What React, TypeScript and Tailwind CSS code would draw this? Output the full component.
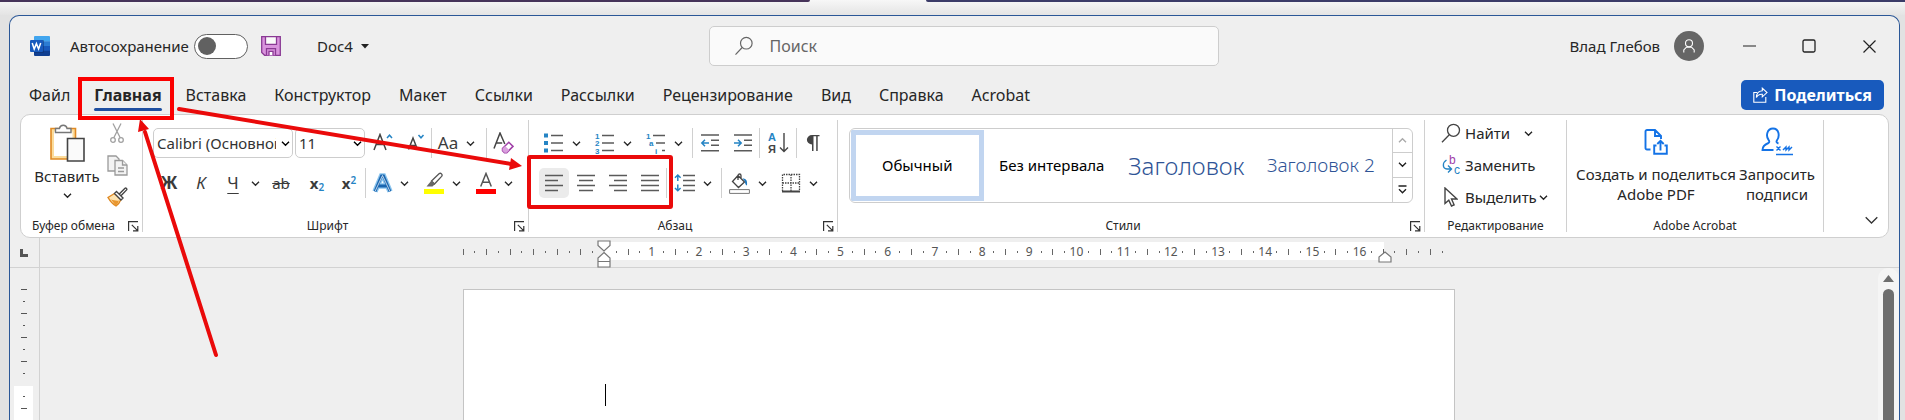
import type { ReactNode } from "react";

const Chevron = ({ className = "" }: { className?: string }) => (
  <svg width="9" height="9" viewBox="0 0 9 9" fill="none" stroke="currentColor" strokeWidth="1.4" className={className} aria-hidden="true">
    <path d="M1 2.8 4.5 6.2 8 2.8" />
  </svg>
);

const More = ({ label }: { label: string }) => (
  <button type="button" aria-label={label} className="flex h-full w-3 shrink-0 items-center justify-center text-[#2b2b2b]">
    <Chevron />
  </button>
);

const Tool = ({ label, children, className = "w-8" }: { label: string; children: ReactNode; className?: string }) => (
  <button type="button" aria-label={label} title={label} className={`flex h-full shrink-0 items-center justify-center text-[#3b3b3b] ${className}`}>
    {children}
  </button>
);

const Sep = ({ className = "" }: { className?: string }) => <div className={`h-full w-px shrink-0 bg-[#d0d0d0] ${className}`} />;

const GroupSep = () => <div className="my-[5px] w-px shrink-0 bg-[#d0d0d0]" />;

const Row = ({ children }: { children: ReactNode }) => <div className="flex h-[30px] items-center">{children}</div>;

const Launcher = ({ label }: { label: string }) => (
  <button type="button" aria-label={label} className="mr-0.5 flex w-3.5 justify-center">
    <svg width="11" height="11" viewBox="0 0 11 11" fill="none" stroke="#333" strokeWidth="1.2">
      <path d="M.6 10V.6H10M3.8 3.8 9.6 9.6M9.8 5V9.8H5" />
    </svg>
  </button>
);

const Group = ({ name, className, launcher = true, children }: { name: string; className: string; launcher?: boolean; children: ReactNode }) => (
  <section aria-label={name} className={`flex flex-col ${className}`}>
    {children}
    <div className="mt-auto flex h-[22px] items-center">
      <span className="flex-1 text-center text-[12px] text-[#262626]">{name}</span>
      {launcher && <Launcher label={`Параметры: ${name}`} />}
    </div>
  </section>
);

const Lines = ({ rows }: { rows: [number, number][] }) => (
  <svg width="20" height="20" viewBox="0 0 20 20" stroke="#5a5a5a" strokeWidth="1.5" aria-hidden="true">
    {rows.map(([a, b], i) => (
      <path key={i} d={`M${a} ${2.5 + i * 5}H${b}`} />
    ))}
  </svg>
);

const ListIcon = ({ marks }: { marks: string[] }) => (
  <svg width="20" height="24" viewBox="0 0 20 24" className="overflow-visible font-['Liberation_Sans',sans-serif]" aria-hidden="true">
    {marks.map((m, i) => {
      const y = 4.5 + i * 7.5;
      const shift = m === "a" ? 3 : m === "i" ? 9 : 0;
      return (
        <g key={i}>
          {m === "•" ? (
            <rect x="0" y={y - 2} width="4" height="4" fill="#2584c4" />
          ) : (
            <text x={shift} y={y + 3} fontSize="8" fontWeight="700" fill="#2584c4">{m}</text>
          )}
          <path d={`M${7 + shift} ${y}H19`} stroke="#5a5a5a" strokeWidth="1.5" />
        </g>
      );
    })}
  </svg>
);

const IndentIcon = ({ right = false }: { right?: boolean }) => (
  <svg width="20" height="20" viewBox="0 0 20 20" fill="none" strokeWidth="1.5" aria-hidden="true">
    <path d="M1 2h18M11 7.3h8M11 12.3h8M1 17.7h18" stroke="#5a5a5a" />
    <path d={right ? "M1 10h7M5 6.8 8.2 10 5 13.2" : "M9 10H2M5 6.8 1.8 10 5 13.2"} stroke="#2584c4" />
  </svg>
);

const TABS = ["Файл", "Главная", "Вставка", "Конструктор", "Макет", "Ссылки", "Рассылки", "Рецензирование", "Вид", "Справка", "Acrobat"];

const TitleBar = () => (
  <header className="grid h-[60px] grid-cols-[1fr_510px_1fr] items-center pl-[18px] text-[15px] text-[#262626]">
    <div className="flex items-center pl-0.5">
      <svg width="20" height="20" viewBox="0 0 20 20" aria-hidden="true">
        <path d="M5 0h14a1 1 0 0 1 1 1v4.5H4V1a1 1 0 0 1 1-1Z" fill="#41a5ee" />
        <path d="M4 5.3h16v5H4z" fill="#2b7cd3" />
        <path d="M4 10h16v5H4z" fill="#185abd" />
        <path d="M4 14.7h16V19a1 1 0 0 1-1 1H5a1 1 0 0 1-1-1z" fill="#103f91" />
        <path d="M4 4h9a1 1 0 0 1 1 1v11a1 1 0 0 1-1 1H4z" fill="#0d2f6b" opacity=".5" />
        <rect y="4" width="13" height="12" rx="1" fill="#185abd" />
        <path d="M2.2 7 4.2 13 6.4 7.6 8.6 13 10.7 7" fill="none" stroke="#fff" strokeWidth="1.5" />
      </svg>
      <label htmlFor="autosave" className="ml-5 w-[124px]">Автосохранение</label>
      <span className="relative flex h-[25px] w-[54px] items-center rounded-full border border-[#616161] bg-white">
        <input id="autosave" type="checkbox" role="switch" className="absolute inset-0 size-full appearance-none rounded-full" />
        <span className="ml-[3px] size-[18px] rounded-full bg-[#616161]" />
      </span>
      <button type="button" aria-label="Сохранить" className="ml-[13px]">
        <svg width="20" height="20" viewBox="0 0 20 20" fill="#d993dd" stroke="#8a3a94" strokeWidth="1.3">
          <path d="M.7.7h18.6v18.6H3.6L.7 16.4Z" />
          <path d="M4.5.7h11v7.6h-11z" fill="#fafafa" />
          <path d="M5.5 19.3v-6.6h9v6.6" fill="#d993dd" />
          <path d="M8 19.3v-4h4v4" fill="#fff" />
        </svg>
      </button>
      <button type="button" className="ml-9 flex items-center gap-2">
        Doc4
        <svg width="8" height="5" viewBox="0 0 8 5" aria-hidden="true"><path d="M0 0h8L4 4.6Z" fill="#222" /></svg>
      </button>
    </div>
    <label className="flex h-10 items-center rounded-[5px] border border-[#cdcdcd] bg-[#fafafa] pl-6 text-[#666]">
      <svg width="20" height="20" viewBox="0 0 20 20" fill="none" stroke="#666" strokeWidth="1.2" aria-hidden="true">
        <circle cx="12.3" cy="7.2" r="5.8" /><path d="M8.2 11.5 1.5 18.6" />
      </svg>
      <input aria-label="Поиск" placeholder="Поиск" className="ml-4 flex-1 bg-transparent text-[16px] outline-none placeholder:text-[#666]" />
    </label>
    <div className="flex items-center justify-end">
      <span>Влад Глебов</span>
      <button type="button" aria-label="Учетная запись" className="ml-3.5 flex size-[30px] items-center justify-center rounded-full bg-[#666]">
        <svg width="14" height="14" viewBox="0 0 14 14" fill="none" stroke="#fff" strokeWidth="1.1"><circle cx="7" cy="4.2" r="3.5" /><path d="M1.8 13.5V11l2.6-2.800h5.2l2.600 2.800v2.500" /></svg>
      </button>
      <div className="ml-[15px] flex">
        <button type="button" aria-label="Свернуть" className="flex h-8 w-[60px] items-center justify-center">
          <svg width="13" height="13" viewBox="0 0 13 13" stroke="#222" strokeWidth="1.2"><path d="M0 6h13" /></svg>
        </button>
        <button type="button" aria-label="Развернуть" className="flex h-8 w-[60px] items-center justify-center">
          <svg width="14" height="14" viewBox="0 0 14 14" fill="none" stroke="#222" strokeWidth="1.3"><rect x="1" y="1" width="12" height="12" rx="1.5" /></svg>
        </button>
        <button type="button" aria-label="Закрыть" className="flex h-8 w-[60px] items-center justify-center">
          <svg width="13" height="13" viewBox="0 0 13 13" stroke="#222" strokeWidth="1.2"><path d="m.5.5 12 12M12.5.5l-12 12" /></svg>
        </button>
      </div>
    </div>
  </header>
);

const TabBar = () => (
  <nav className="flex h-[38px] items-center justify-between pr-[15px] pl-[19px] text-[16px] text-[#262626]">
    <div className="flex items-center gap-7">
      {TABS.map((t) => (
        <a key={t} href="#" className={t === "Главная" ? "relative -mx-1 font-bold" : ""}>
          {t}
          {t === "Главная" && <span className="absolute inset-x-0 -bottom-1 h-[3px] rounded-full bg-[#1f4fa0]" />}
        </a>
      ))}
    </div>
    <button type="button" className="flex h-[30px] items-center gap-1.5 rounded-[5px] bg-[#185abd] px-3 font-bold text-white">
      <svg width="15" height="16" viewBox="0 0 15 16" fill="none" stroke="#fff" strokeWidth="1.1" aria-hidden="true">
        <path d="M4 5.5H.8v9.7h12V10M9.3 1.2 14 5.6 9.3 9.8V7.3C6.5 7 4.6 8.2 3.4 10.6 3.4 6.6 5.6 4 9.3 3.7Z" />
      </svg>
      Поделиться
    </button>
  </nav>
);

const ClipboardGroup = () => (
  <Group name="Буфер обмена" className="w-[121px]">
    <div className="flex pl-3">
      <button type="button" className="flex w-[68px] flex-col items-center pt-2 text-[15px] leading-[22px] text-[#262626]">
        <svg width="36" height="40" viewBox="0 0 36 40" fill="none" className="mb-0.5" aria-hidden="true">
          <path d="M2 5.5h24.5V36H2z" fill="#fbdc9c" stroke="#e08a24" strokeWidth="1.6" />
          <path d="M5 8.5h18.5V33H5z" fill="#fff" />
          <path d="M6.5 9.5V5.5h4a3.8 3.8 0 0 1 7.5 0h4v4Z" fill="#fff" stroke="#777" strokeWidth="1.4" />
          <path d="M18.5 15.5h16.5v22.5H18.5z" fill="#fafafa" stroke="#444" strokeWidth="1.6" />
        </svg>
        Вставить
        <Chevron className="mt-1" />
      </button>
      <div className="grid grid-rows-[32px_32px_32px] pt-0.5">
        <Tool label="Вырезать">
          <svg width="14" height="22" viewBox="0 0 14 22" fill="none" stroke="#a0a0a0" strokeWidth="1.3">
            <path d="M3 1.5 10.2 15.8M11 1.5 3.8 15.8" /><circle cx="3" cy="18" r="2.3" /><circle cx="11" cy="18" r="2.3" />
          </svg>
        </Tool>
        <Tool label="Копировать">
          <svg width="21" height="21" viewBox="0 0 21 21" fill="#f3f3f3" stroke="#9a9a9a" strokeWidth="1.3">
            <path d="M1 16V1h8l3 3v12Z" /><path d="M8 5.5h7.5L20 10v10H8Z" /><path d="M15.5 5.5V10H20M11 13h6M11 16.5h6" />
          </svg>
        </Tool>
        <Tool label="Формат по образцу">
          <svg width="21" height="20" viewBox="0 0 21 20" fill="none">
            <path d="M7.5 6.5 1 10.5c2 3.5 4.5 6.5 8 8.5 2-1.5 4-4 5-6.5Z" fill="#fde3b0" stroke="#e08a24" strokeWidth="1.4" />
            <path d="M4 12.5c3 1 6 1.5 8 1-1 2.5-2 4-3 5.5Z" fill="#e9972f" />
            <path d="m7.5 6.5 2-2 6.5 6.5-2 2ZM12.5 6.8 18 1.3c1-.8 2.4.6 1.6 1.6L14.2 8.6" fill="#fff" stroke="#444" strokeWidth="1.4" />
          </svg>
        </Tool>
      </div>
    </div>
  </Group>
);

const Combo = ({ label, value, className }: { label: string; value: string; className: string }) => (
  <div className={`relative h-[30px] shrink-0 ${className}`}>
    <select aria-label={label} className="size-full appearance-none rounded-[5px] border border-[#cdcdcd] bg-white pr-4 pl-[3px] text-[15px] text-[#333]">
      <option>{value}</option>
    </select>
    <Chevron className="pointer-events-none absolute top-[11px] right-[3px]" />
  </div>
);

const FontGroup = () => (
  <Group name="Шрифт" className="w-[385px]">
    <div className="flex flex-col gap-2.5 pt-[13px] pl-2.5">
      <Row>
        <Combo label="Имя шрифта" value="Calibri (Основной текст)" className="mr-0.5 w-[140px]" />
        <Combo label="Размер шрифта" value="11" className="w-[70px]" />
        <Tool label="Увеличить размер шрифта" className="w-9">
          <svg width="20" height="20" viewBox="0 0 20 20" fill="none" strokeWidth="1.5">
            <path d="M1 17 7 1.5 13 17M3.2 11.5h7.6" stroke="#444" /><path d="m14 5 2.5-2.8L19 5" stroke="#2584c4" />
          </svg>
        </Tool>
        <Tool label="Уменьшить размер шрифта" className="w-[30px]">
          <svg width="18" height="20" viewBox="0 0 18 20" fill="none" strokeWidth="1.5">
            <path d="M1.5 16.5 6 5l4.5 11.5M3.3 12.5h5.4" stroke="#444" /><path d="M11.5 2 14 4.8 16.5 2" stroke="#2584c4" />
          </svg>
        </Tool>
        <Sep />
        <Tool label="Регистр"><span className="text-[17px]">Aa</span></Tool>
        <More label="Варианты регистра" />
        <Sep className="ml-2.5" />
        <Tool label="Удалить форматирование">
          <svg width="21" height="22" viewBox="0 0 21 22" fill="none" strokeWidth="1.5">
            <path d="M1 16.5 7 1l4.8 11M3.2 11h6" stroke="#444" />
            <path d="m9.5 16.5 6.3-6.3 4.2 4.2-6.3 6.3h-2.2l-2-2Z" fill="#fff" stroke="#a040a8" /><path d="m9.500 16.500 2.600-2.600 4.200 4.200-2.600 2.600h-2.200l-2-2Z" fill="#d9a0de" />
          </svg>
        </Tool>
      </Row>
      <Row>
        <Tool label="Полужирный"><span className="text-[17px] font-bold">Ж</span></Tool>
        <Tool label="Курсив"><span className="text-[17px] italic">К</span></Tool>
        <Tool label="Подчеркнутый"><span className="text-[17px] underline underline-offset-4">Ч</span></Tool>
        <More label="Виды подчеркивания" />
        <Tool label="Зачеркнутый" className="w-10"><span className="text-[15px] line-through">ab</span></Tool>
        <Tool label="Подстрочный знак"><span className="text-[15px] font-bold">x<sub className="text-[10px] font-semibold text-[#2584c4]">2</sub></span></Tool>
        <Tool label="Надстрочный знак"><span className="text-[15px] font-bold">x<sup className="text-[10px] font-semibold text-[#2584c4]">2</sup></span></Tool>
        <Sep />
        <Tool label="Текстовые эффекты">
          <svg width="21" height="21" viewBox="0 0 21 21" fill="none">
            <path d="M3 18.5 9.5 3h2L18 18.5M6 13h9" stroke="#8cc5ee" strokeWidth="5.5" />
            <path d="M3 18.5 9.5 3h2L18 18.5M6 13h9" stroke="#1b66b0" strokeWidth="2.8" />
            <path d="M3 18.5 10.5 2.500l7.500 16" stroke="#fff" strokeWidth=".7" />
          </svg>
        </Tool>
        <More label="Варианты эффектов" />
        <Tool label="Цвет выделения" className="ml-2 w-8">
          <svg width="22" height="22" viewBox="0 0 22 22" fill="none">
            <path d="m8.5 9 7.5-7.200c1.800-1.400 4 .8 2.600 2.600L11.500 12Z" fill="#fff" stroke="#555" strokeWidth="1.3" />
            <path d="M8.5 8.5 12 12l-2.500 2.500H3.500Z" fill="#666" /><path d="M1 17h20v5H1z" fill="#ff0" />
          </svg>
        </Tool>
        <More label="Варианты выделения" />
        <Tool label="Цвет текста" className="ml-2 w-8">
          <svg width="20" height="22" viewBox="0 0 20 22" fill="none">
            <path d="M4.7 14.5 10 1.500l5.300 13M6.700 10.200h6.600" stroke="#555" strokeWidth="1.5" /><path d="M0 17h20v5H0z" fill="red" />
          </svg>
        </Tool>
        <More label="Варианты цвета" />
      </Row>
    </div>
  </Group>
);

const ParagraphGroup = () => (
  <Group name="Абзац" className="w-[308px]">
    <div className="flex flex-col gap-2.5 pt-[13px] pl-[9px]">
      <Row>
        <Tool label="Маркеры"><ListIcon marks={["•", "•", "•"]} /></Tool>
        <More label="Виды маркеров" />
        <Tool label="Нумерация" className="ml-[7px] w-8"><ListIcon marks={["1", "2", "3"]} /></Tool>
        <More label="Виды нумерации" />
        <Tool label="Многоуровневый список" className="ml-[7px] w-8"><ListIcon marks={["1", "a", "i"]} /></Tool>
        <More label="Виды списков" />
        <Sep className="ml-2" />
        <Tool label="Уменьшить отступ" className="w-[34px]"><IndentIcon /></Tool>
        <Tool label="Увеличить отступ"><IndentIcon right /></Tool>
        <Sep />
        <Tool label="Сортировка" className="w-9">
          <svg width="21" height="24" viewBox="0 0 21 24" fill="none" className="overflow-visible font-['Liberation_Sans',sans-serif]">
            <text x="0" y="10" fontSize="11" fontWeight="700" fill="#2584c4">A</text>
            <text x="0" y="22" fontSize="11" fontWeight="700" fill="#444">Я</text>
            <path d="M16 2v18M12 16.500l4 4 4-4" stroke="#444" strokeWidth="1.4" />
          </svg>
        </Tool>
        <Sep />
        <Tool label="Отобразить все знаки">
          <svg width="14" height="18" viewBox="0 0 14 18"><path d="M13.500 1H6a5 4.600 0 0 0 0 9.400V17h1.500V2.300h2.700V17h1.500V2.300h1.800Z" fill="#444" /></svg>
        </Tool>
      </Row>
      <Row>
        <Tool label="По левому краю"><span className="flex size-[30px] items-center justify-center rounded-[5px] bg-[#ebebeb]"><Lines rows={[[1, 19], [1, 14], [1, 19], [1, 14]]} /></span></Tool>
        <Tool label="По центру"><Lines rows={[[1, 19], [3, 17], [1, 19], [3, 17]]} /></Tool>
        <Tool label="По правому краю"><Lines rows={[[1, 19], [6, 19], [1, 19], [6, 19]]} /></Tool>
        <Tool label="По ширине"><Lines rows={[[1, 19], [1, 19], [1, 19], [1, 19]]} /></Tool>
        <Sep />
        <Tool label="Интервал" className="w-[34px]">
          <svg width="21" height="20" viewBox="0 0 21 20" fill="none" strokeWidth="1.5">
            <path d="M9 2.500h12M9 7.500h12M9 12.500h12M9 17.500h12" stroke="#5a5a5a" />
            <path d="M3.800 8V2M1 4.800 3.800 2l2.800 2.800M3.800 11.500v6M1 15l2.800 2.800L6.600 15" stroke="#2584c4" />
          </svg>
        </Tool>
        <More label="Варианты интервала" />
        <Sep className="ml-2" />
        <Tool label="Заливка" className="w-[34px]">
          <svg width="21" height="21" viewBox="0 0 21 21" fill="none">
            <path d="m9 2.500 6.500 6.500-6 5.500-6-6ZM9 7V2.500c0-2 3-2 3 0v3" stroke="#444" strokeWidth="1.3" />
            <path d="M13.500 5.500c4 0 5 2.500 4.500 7-1.500-.5-2-2-2-4Z" fill="#1f78bd" /><path d="M.6 16.600h19.800v3.800H.6z" fill="#fff" stroke="#777" />
          </svg>
        </Tool>
        <More label="Варианты заливки" />
        <Tool label="Границы" className="ml-[7px] w-8">
          <svg width="20" height="20" viewBox="0 0 20 20" fill="none" stroke="#444">
            <path d="M1.500 18V1.500h17V18M10 1.500V18M1.500 10h17" strokeWidth="1.3" strokeDasharray="1.5 1" /><path d="M1 18.500h18" strokeWidth="2" />
          </svg>
        </Tool>
        <More label="Виды границ" />
      </Row>
    </div>
  </Group>
);

const StylesGroup = () => (
  <Group name="Стили" className="min-w-0 flex-1">
    <div className="mx-[11px] mt-[13px] flex h-[75px] overflow-hidden rounded-md border border-[#cdcdcd]">
      <div className="grid flex-1 grid-cols-4 items-center pr-1 text-[15px] whitespace-nowrap text-black">
        <button type="button" aria-pressed="true" className="m-px h-[71px] border-[5px] border-[#c1d5f0]">Обычный</button>
        <button type="button">Без интервала</button>
        <button type="button" className="text-[24px] font-light text-[#2f5496]">Заголовок</button>
        <button type="button" className="text-[19px] font-light text-[#2f5496]">Заголовок 2</button>
      </div>
      <div className="grid w-5 grid-rows-3 divide-y divide-[#cdcdcd] border-l border-[#cdcdcd] text-[#222]">
        <button type="button" aria-label="Вверх" className="flex items-center justify-center text-[#aaa]"><Chevron className="rotate-180" /></button>
        <button type="button" aria-label="Вниз" className="flex items-center justify-center"><Chevron /></button>
        <button type="button" aria-label="Все стили" className="flex items-center justify-center">
          <svg width="9" height="9" viewBox="0 0 9 9" fill="none" stroke="currentColor" strokeWidth="1.4"><path d="M.5 1h8M1 4.300l3.500 3.400L8 4.300" /></svg>
        </button>
      </div>
    </div>
  </Group>
);

const EditItem = ({ icon, label, more }: { icon: ReactNode; label: string; more?: string }) => (
  <button type="button" className="flex h-8 items-center text-[15px] text-[#262626]">
    <span className="mr-1 flex w-5 justify-center">{icon}</span>
    {label}
    {more && <Chevron className={more} />}
  </button>
);

const EditingGroup = () => (
  <Group name="Редактирование" className="w-[141px]" launcher={false}>
    <div className="flex flex-col pt-0.5 pl-4">
      <EditItem label="Найти" more="ml-3.5" icon={
        <svg width="20" height="20" viewBox="0 0 20 20" fill="none" stroke="#444" strokeWidth="1.3"><circle cx="12.5" cy="7.3" r="6" /><path d="M8.300 11.800 1 19.200" /></svg>
      } />
      <EditItem label="Заменить" icon={
        <svg width="19" height="22" viewBox="0 0 19 22" fill="none" className="overflow-visible font-['Liberation_Sans',sans-serif]">
          <text x="7" y="10" fontSize="12" fill="#a040a8">b</text><text x="12" y="20" fontSize="12" fill="#2584c4">c</text>
          <path d="M4.500 6C.5 8.500 0 14.500 5 15h4M6 11.500 9.500 15 6 18.500" stroke="#2584c4" strokeWidth="1.4" />
        </svg>
      } />
      <EditItem label="Выделить" more="ml-0.5" icon={
        <svg width="14" height="20" viewBox="0 0 14 20" fill="#fff" stroke="#444" strokeWidth="1.4"><path d="M1 1v15.500l3.800-3.300L7.500 19l2.600-1.200L7.500 12H13Z" /></svg>
      } />
    </div>
  </Group>
);

const AcrobatGroup = () => (
  <Group name="Adobe Acrobat" className="w-[256px]" launcher={false}>
    <div className="flex pt-3 pl-3 text-[15px] leading-5 text-[#262626]">
      <button type="button" className="flex w-[154px] flex-col items-center gap-2 whitespace-nowrap">
        <svg width="24" height="29" viewBox="0 0 24 29" fill="none" stroke="#1473e6" strokeWidth="1.9" aria-hidden="true">
          <path d="M6.500 22.500H3A1.500 1.500 0 0 1 1.500 21V4.500A1.500 1.500 0 0 1 3 3h8l6 6v3M11 3v6h6M12.500 18.500h-2.300v8.300h12.600v-8.300h-2.300M16.500 23.500v-9M13.300 17l3.200-3.200 3.200 3.200" />
        </svg>
        <span>Создать и поделиться<br />Adobe PDF</span>
      </button>
      <button type="button" className="ml-1 flex w-[80px] flex-col items-center gap-2">
        <svg width="32" height="29" viewBox="0 0 32 29" fill="none" stroke="#1473e6" strokeWidth="1.9" aria-hidden="true">
          <path d="M12.500 23H1.500c0-4 2-5.500 6-7 1-.5 1-1.800.2-2.800C4.500 9 6 1.500 12 1.500S19 9 16 13.200c-1 1.500-.5 2.500 1.500 3.300" />
          <path d="M15 27.500h17M15.500 19.500l4 4M19.500 19.500l-4 4M22 23l3-3v3l3-3v3l3-3" strokeWidth="1.4" />
        </svg>
        <span>Запросить<br />подписи</span>
      </button>
    </div>
  </Group>
);

const Ribbon = () => (
  <div className="mx-2.5 flex h-[124px] rounded-[10px] border border-[#cfcfcf] bg-white">
    <ClipboardGroup />
    <GroupSep />
    <FontGroup />
    <GroupSep />
    <ParagraphGroup />
    <GroupSep />
    <StylesGroup />
    <GroupSep />
    <EditingGroup />
    <GroupSep />
    <AcrobatGroup />
    <GroupSep />
    <div className="flex w-16 items-end justify-end pr-2.5 pb-3">
      <button type="button" aria-label="Свернуть ленту">
        <svg width="13" height="9" viewBox="0 0 13 9" fill="none" stroke="#333" strokeWidth="1.3"><path d="M.7 1.200 6.500 7l5.800-5.800" /></svg>
      </button>
    </div>
  </div>
);

const QUARTERS = Array.from({ length: 85 }, (_, k) => k);

const RulerMark = ({ k }: { k: number }) => {
  if (k === 84 || k === 12) return null;
  const cm = (k - 12) / 4;
  if (cm >= 1 && cm <= 16 && cm % 1 === 0) return <span className="text-[12px] leading-none text-[#555]">{cm}</span>;
  return <span className={k % 2 === 0 ? "h-1.5 w-px shrink-0 bg-[#666]" : "h-0.5 w-px shrink-0 bg-[#666]"} />;
};

const Ruler = () => (
  <div className="flex h-[30px] border-b border-[#d2d2d2]">
    <div className="flex w-[30px] items-center border-r border-[#d2d2d2] pl-2.5">
      <svg width="8" height="8" viewBox="0 0 8 8" aria-hidden="true"><path d="M1.500 0v6.500H8" fill="none" stroke="#555" strokeWidth="3" /></svg>
    </div>
    <div className="flex flex-1 justify-center">
      <div className="relative h-full w-[992px]">
        <div className="absolute top-1 right-1/14 left-1/7 h-[18px] bg-white" />
        <div className="relative flex h-[27px] items-center justify-between">
          {QUARTERS.map((k) => (
            <span key={k} className="flex w-0 justify-center"><RulerMark k={k} /></span>
          ))}
        </div>
        <svg className="absolute top-0.5 left-1/7 -ml-2" width="14" height="28" viewBox="0 0 14 28" fill="#fff" stroke="#777" strokeWidth="1.2" aria-hidden="true">
          <path d="M1 1h12v4.500L7 11 1 5.500ZM7 12.500l6 5.500v9H1v-9ZM1 21.500h12" />
        </svg>
        <svg className="absolute top-[13px] right-1/14 -mr-2" width="14" height="12" viewBox="0 0 14 12" fill="#fff" stroke="#777" strokeWidth="1.2" aria-hidden="true">
          <path d="m7 1 6 5v5H1V6Z" />
        </svg>
      </div>
    </div>
    <div className="w-[21px]" />
  </div>
);

const VerticalRuler = () => (
  <div className="flex w-[30px] flex-col border-r border-[#d2d2d2] pr-1.5 pl-1">
    <div className="flex flex-col items-center gap-[11px] pt-[21px] pb-3">
      {[0, 1, 2, 3, 4, 5, 6, 7].map((k) => (
        <span key={k} className={k % 2 === 0 ? "h-px w-1.5 bg-[#555]" : "h-px w-0.5 bg-[#555]"} />
      ))}
    </div>
    <div className="flex flex-1 flex-col items-center gap-[11px] bg-white pt-2.5">
      {[0, 1, 2].map((k) => (
        <span key={k} className={k % 2 === 1 ? "h-px w-1.5 bg-[#555]" : "h-px w-0.5 bg-[#555]"} />
      ))}
    </div>
  </div>
);

const DocumentArea = () => (
  <div className="flex flex-1">
    <VerticalRuler />
    <main className="flex flex-1 justify-center pt-[21px]">
      <div className="w-[992px] border border-b-0 border-[#c4c4c4] bg-white pt-[94px] pl-[141px]" role="textbox" aria-label="Документ" aria-multiline="true">
        <span className="block h-[22px] w-px bg-black" />
      </div>
    </main>
    <div className="flex w-[21px] flex-col items-center gap-[7px] rounded-t-[10px] bg-[#f5f5f5] pt-[7px]">
      <svg width="11" height="7" viewBox="0 0 11 7" aria-hidden="true"><path d="M5.500 0 11 7H0Z" fill="#6e6e6e" /></svg>
      <div className="w-[11px] flex-1 rounded-t-full bg-[#6e6e6e]" />
    </div>
  </div>
);

const Annotations = () => (
  <svg className="pointer-events-none absolute top-0 left-0" width="700" height="400" viewBox="0 0 700 400" fill="none" aria-hidden="true">
    <rect x="80" y="79" width="92" height="39" stroke="#fb0000" strokeWidth="4" />
    <rect x="529" y="157" width="142" height="50" rx="1" stroke="#ea0a0a" strokeWidth="4" />
    <path d="M179 109 511 164M216 355 145 132" stroke="#ea0a0a" strokeWidth="4" strokeLinecap="round" />
    <path d="m522 166-13 4 2-12ZM140 119l9 10-11 3Z" fill="#ea0a0a" />
  </svg>
);

export default function App() {
  return (
    <div className="relative flex min-h-screen flex-col bg-[#e2e2e2] font-['Noto_Sans','Open_Sans',sans-serif]">
      <div className="flex h-[15px] shrink-0 flex-col bg-linear-to-b from-[#f7f7f7] to-[#e4e4e4]">
        <div className="flex h-0.5 gap-[116px]">
          <div className="w-[810px] rounded-br bg-[#47345a]" />
          <div className="flex-1 rounded-bl bg-[#3b3b68]" />
        </div>
      </div>
      <div className="mr-[5px] ml-[9px] flex flex-1 flex-col overflow-hidden rounded-t-[10px] border border-b-0 border-[#2b5797] bg-[#efefef]">
        <TitleBar />
        <TabBar />
        <Ribbon />
        <Ruler />
        <DocumentArea />
      </div>
      <Annotations />
    </div>
  );
}
